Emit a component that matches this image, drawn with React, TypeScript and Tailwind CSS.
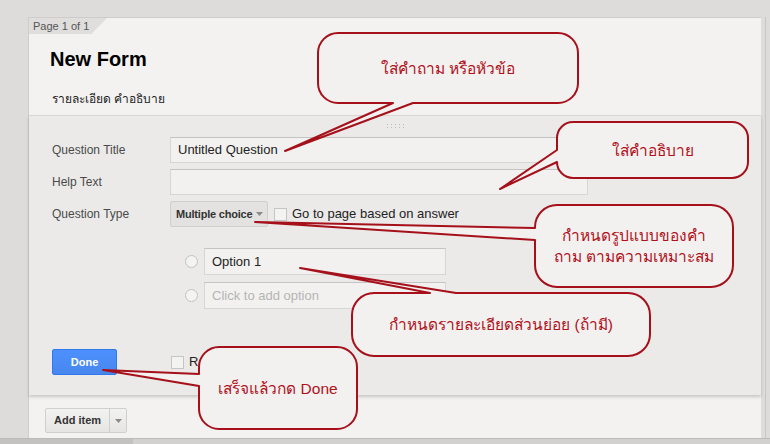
type Side = 'top' | 'bottom' | 'left';

type Callout = {
  x: number; y: number; w: number; h: number; r: number;
  side: Side; a: number; b: number; tx: number; ty: number;
  lines: string[];
};

const callouts: Callout[] = [
  { x: 318, y: 33, w: 260, h: 70, r: 20, side: 'bottom', a: 393, b: 413, tx: 285, ty: 151, lines: ['ใส่คำถาม หรือหัวข้อ'] },
  { x: 557, y: 122, w: 191, h: 56, r: 16, side: 'left', a: 150, b: 162, tx: 500, ty: 189, lines: ['ใส่คำอธิบาย'] },
  { x: 535, y: 205, w: 198, h: 82, r: 22, side: 'left', a: 228, b: 240, tx: 255, ty: 222, lines: ['กำหนดรูปแบบของคำ', 'ถาม ตามความเหมาะสม'] },
  { x: 352, y: 293, w: 298, h: 63, r: 22, side: 'top', a: 430, b: 456, tx: 300, ty: 268, lines: ['กำหนดรายละเอียดส่วนย่อย (ถ้ามี)'] },
  { x: 199, y: 347, w: 158, h: 82, r: 20, side: 'left', a: 374, b: 386, tx: 103, ty: 370, lines: ['เสร็จแล้วกด Done'] },
];

// rounded box with a wedge tail, walked clockwise
function bubblePath(c: Callout) {
  const { x, y, w, h, r, side, a, b, tx, ty } = c;
  const R = x + w;
  const B = y + h;
  let d = `M${x + r},${y}`;
  if (side === 'top') d += ` L${a},${y} L${tx},${ty} L${b},${y}`;
  d += ` L${R - r},${y} A${r},${r} 0 0 1 ${R},${y + r} L${R},${B - r} A${r},${r} 0 0 1 ${R - r},${B}`;
  if (side === 'bottom') d += ` L${b},${B} L${tx},${ty} L${a},${B}`;
  d += ` L${x + r},${B} A${r},${r} 0 0 1 ${x},${B - r}`;
  if (side === 'left') d += ` L${x},${b} L${tx},${ty} L${x},${a}`;
  d += ` L${x},${y + r} A${r},${r} 0 0 1 ${x + r},${y} Z`;
  return d;
}

function Checkbox() {
  return <span className="inline-block h-[13px] w-[13px] border border-[#c6c6c6] bg-[#f3f3f2]" />;
}

function Radio() {
  return <span className="inline-block h-[13px] w-[13px] rounded-full border border-[#c2c2c2] bg-[#f3f3f2]" />;
}

function TextBox({ value, placeholder, width }: { value?: string; placeholder?: string; width: string }) {
  return (
    <div className={`flex h-[26px] items-center border border-[#d6d6d6] border-t-[#c4c4c4] bg-[#f2f1f0] px-[7px] text-[13px] ${width}`}>
      {value ? <span className="text-[#222]">{value}</span> : <span className="text-[#b5b5b5]">{placeholder}</span>}
    </div>
  );
}

function Caret() {
  return (
    <svg width="7" height="4" viewBox="0 0 7 4" className="shrink-0">
      <path d="M0 0 L7 0 L3.5 4 Z" fill="#8a8a8a" />
    </svg>
  );
}

export default function App() {
  return (
    <div className="relative flex h-[444px] w-[770px] flex-col overflow-hidden bg-[#dedcda] font-['Liberation_Sans',Arial,sans-serif]">
      <div className="flex h-[438px] pt-[17px] pl-[28px]">
        {/* form page */}
        <div className="flex h-[421px] w-[733px] flex-col border-t border-l border-[#cfcdcb] bg-[#f3f2f1]">
          <div className="flex h-[97px] flex-col">
            <div className="flex h-[16px] w-[78px] items-center bg-[#dfdedc] pl-[4px] text-[11px] text-[#555] [clip-path:polygon(0_0,100%_0,80%_100%,0_100%)]">
              Page 1 of 1
            </div>
            <h1 className="mt-[13px] pl-[21px] text-[20px] leading-[24px] font-bold text-black">New Form</h1>
            <p className="mt-[20px] pl-[23px] text-[12px] leading-[16px] text-[#222]">รายละเอียด คำอธิบาย</p>
          </div>

          {/* question editor */}
          <div className="flex h-[280px] flex-col border-t border-[#d8d7d5] bg-[#ebeae9] pl-[23px] shadow-[0_2px_3px_rgba(0,0,0,0.18)]">
            <div className="flex h-[21px] items-center justify-center pr-[23px]">
              <svg width="17" height="5" viewBox="0 0 17 5">
                {[0, 4, 8, 12, 16].map((cx) => (
                  <g key={cx} fill="#b9b9b9">
                    <rect x={cx} y="0" width="1" height="1" />
                    <rect x={cx} y="3" width="1" height="1" />
                  </g>
                ))}
              </svg>
            </div>
            <div className="flex items-center">
              <span className="w-[118px] text-[12px] text-[#4a4a4a]">Question Title</span>
              <TextBox value="Untitled Question" width="w-[418px]" />
            </div>
            <div className="mt-[6px] flex items-center">
              <span className="w-[118px] text-[12px] text-[#4a4a4a]">Help Text</span>
              <TextBox width="w-[418px]" />
            </div>
            <div className="mt-[6px] flex items-center">
              <span className="w-[118px] text-[12px] text-[#4a4a4a]">Question Type</span>
              <div className="flex h-[26px] w-[98px] items-center gap-[4px] rounded-[2px] border border-[#cfcfcf] bg-[#e3e2e0] pl-[5px] text-[11px] font-bold tracking-[-0.2px] whitespace-nowrap text-[#333]">
                Multiple choice
                <Caret />
              </div>
              <span className="ml-[6px] flex items-center"><Checkbox /></span>
              <span className="ml-[5px] text-[13px] text-[#222]">Go to page based on answer</span>
            </div>

            <div className="mt-[21px] flex flex-col gap-[7px] pl-[133px]">
              <div className="flex items-center gap-[6px]">
                <Radio />
                <TextBox value="Option 1" width="w-[242px] h-[27px]" />
              </div>
              <div className="flex items-center gap-[6px]">
                <Radio />
                <TextBox placeholder="Click to add option" width="w-[242px] h-[27px]" />
              </div>
            </div>

            <div className="mt-[40px] flex items-center">
              <button className="h-[26px] w-[65px] rounded-[2px] border border-[#3079ed] bg-gradient-to-b from-[#4d90fe] to-[#4787ed] text-[11px] font-bold text-white">
                Done
              </button>
              <span className="ml-[54px] flex items-center"><Checkbox /></span>
              <span className="ml-[5px] text-[13px] text-[#222]">Required question</span>
            </div>
          </div>

          <div className="mt-[13px] flex pl-[16px]">
            <div className="flex h-[25px] rounded-[2px] border border-[#cfcfcf] bg-gradient-to-b from-[#f2f2f1] to-[#e6e5e4]">
              <span className="flex w-[63px] items-center justify-center text-[11px] font-bold text-[#333]">Add item</span>
              <span className="flex w-[17px] items-center justify-center border-l border-[#cfcfcf]">
                <Caret />
              </span>
            </div>
          </div>
        </div>
        <div className="ml-[4px] h-full w-[1px] bg-[#c9c7c5]" />
      </div>
      <div className="flex h-[6px] border-t border-[#bdbbb9]">
        <div className="w-[133px] bg-[#c4c2c0]" />
        <div className="flex-1 bg-[#d3d1cf]" />
      </div>

      {/* annotations */}
      <svg className="pointer-events-none absolute inset-0" width="770" height="444" viewBox="0 0 770 444">
        {callouts.map((c, i) => (
          <path key={i} d={bubblePath(c)} fill="#f2f1f0" stroke="#a5101a" strokeWidth="2" strokeLinejoin="round" />
        ))}
      </svg>
      {callouts.map((c, i) => (
        <div
          key={i}
          className="pointer-events-none absolute flex flex-col items-center justify-center text-[15.5px] leading-[21px] text-[#b0121c]"
          style={{ left: c.x, top: c.y, width: c.w, height: c.h }}
        >
          {c.lines.map((l) => (
            <span key={l}>{l}</span>
          ))}
        </div>
      ))}
    </div>
  );
}
